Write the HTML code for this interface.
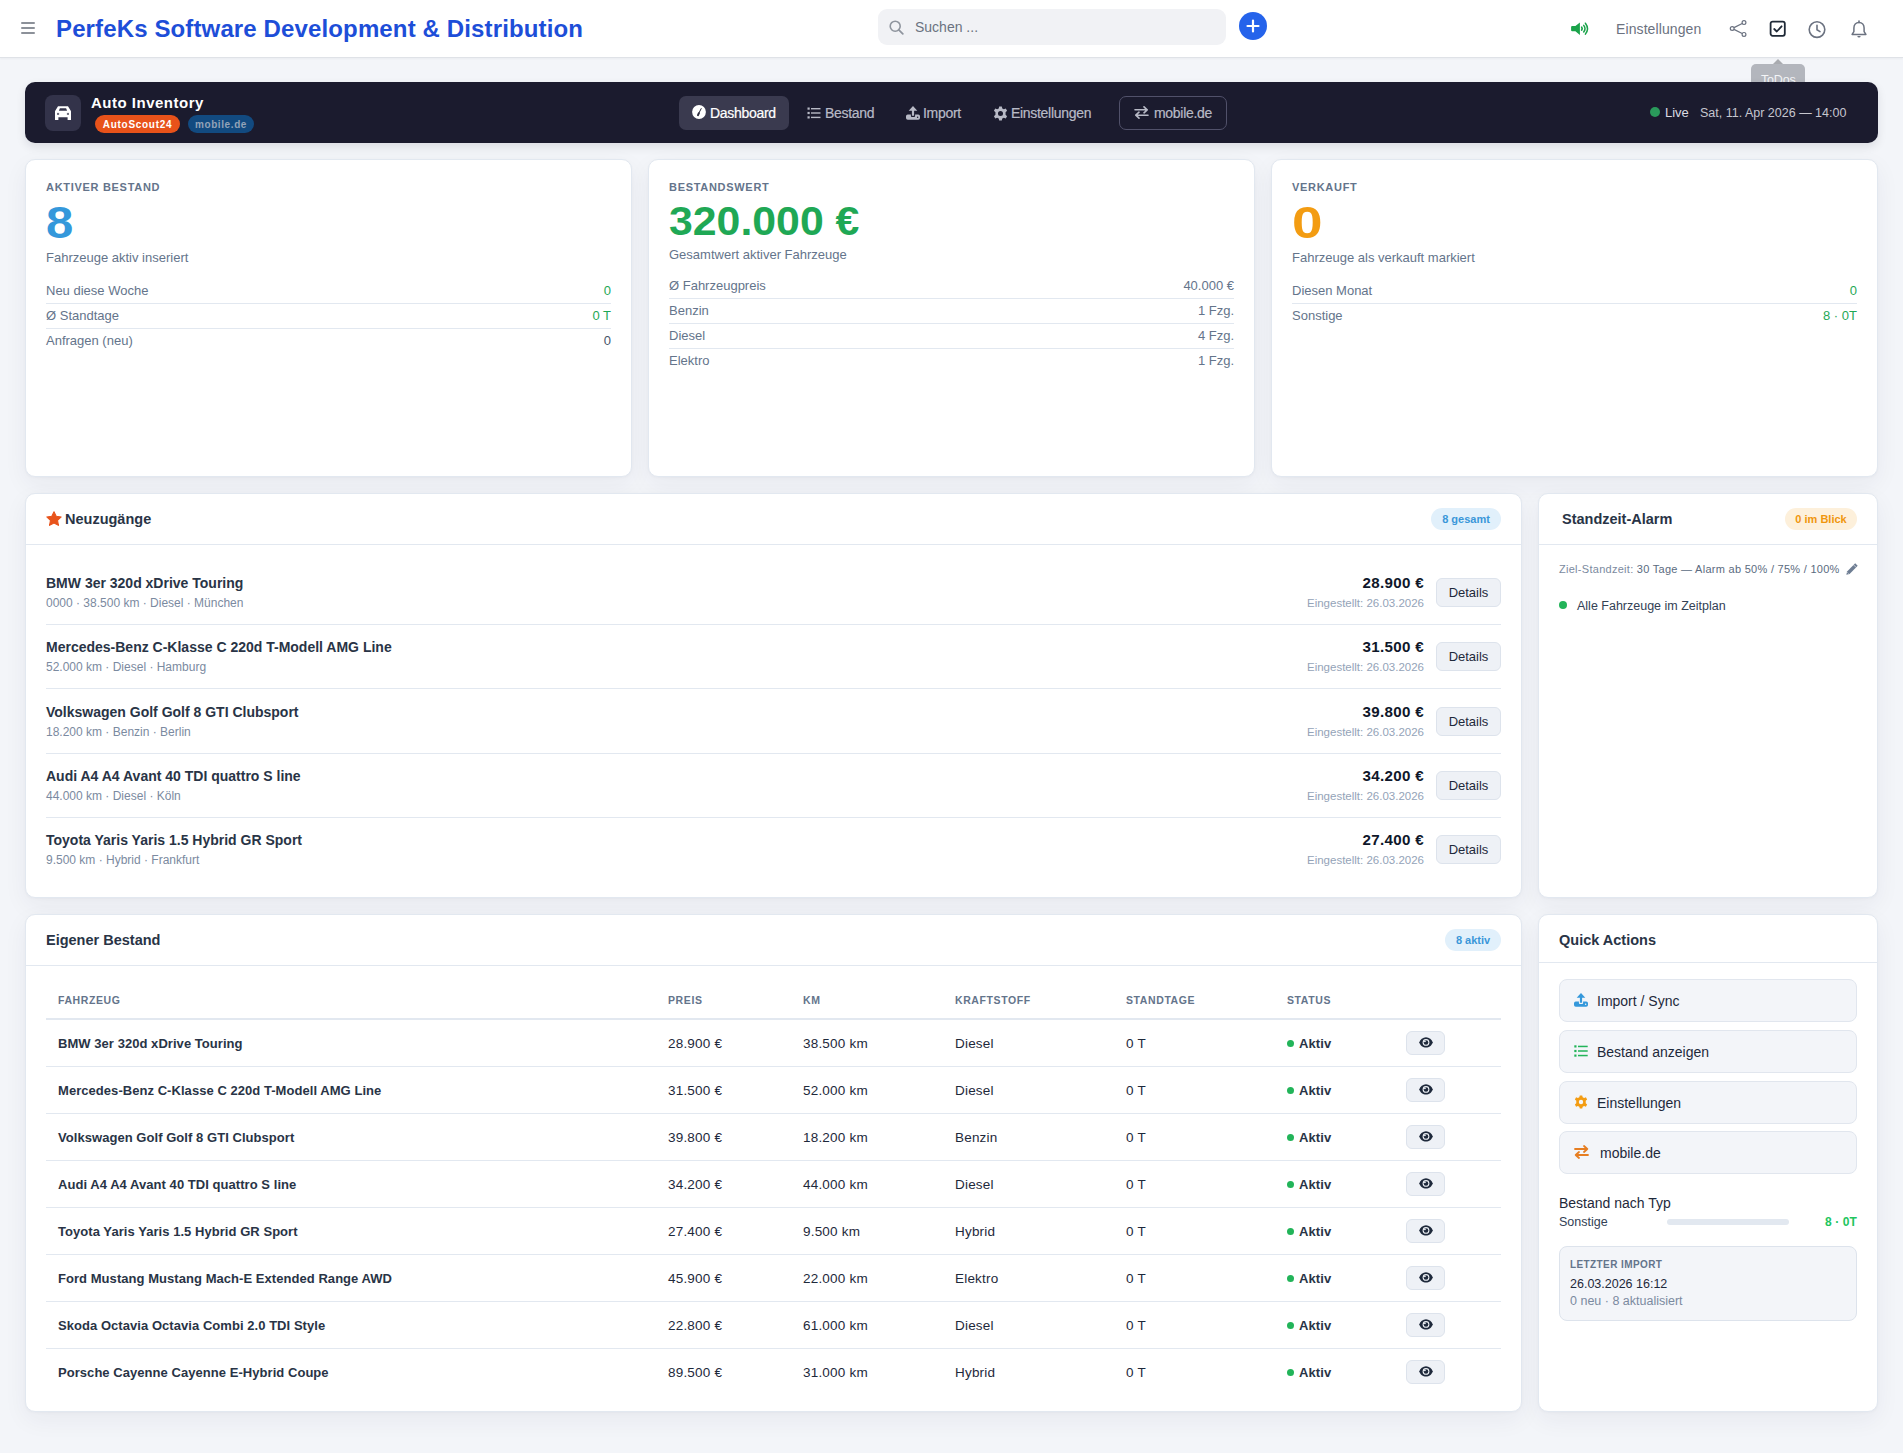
<!DOCTYPE html>
<html lang="de">
<head>
<meta charset="utf-8">
<title>Auto Inventory</title>
<style>
*{box-sizing:border-box;margin:0;padding:0}
html,body{width:1903px;height:1453px;overflow:hidden}
body{background:#f3f5f9;font-family:"Liberation Sans",sans-serif;color:#1e293b;position:relative}
.abs{position:absolute}
/* top header */
#top{position:absolute;left:0;top:0;width:1903px;height:58px;background:#fff;border-bottom:1px solid #dfe2e7;box-shadow:0 1px 2px rgba(0,0,0,.04)}
#burger{left:21px;top:22px;width:14px;height:12px}
#burger i{position:absolute;left:0;width:14px;height:2px;background:#8c9199;border-radius:1px}
#brand{left:56px;top:13px;font-weight:bold;font-size:24px;line-height:32px;color:#1d4ed8;letter-spacing:0.13px;white-space:nowrap}
#search{left:878px;top:9px;width:348px;height:36px;background:#f1f2f5;border-radius:9px}
#search span{position:absolute;left:37px;top:10px;font-size:14px;line-height:16px;color:#6b7280}
#plus{left:1239px;top:12px;width:28px;height:28px;border-radius:50%;background:#2563eb}
#einst{left:1616px;top:19px;font-size:14px;line-height:20px;color:#6b7280;letter-spacing:0.1px}
#tooltip{left:1751px;top:64px;width:54px;height:30px;background:#b3b6bd;border-radius:5px}
#tooltip:before{content:"";position:absolute;left:22px;top:-5px;border-left:5px solid transparent;border-right:5px solid transparent;border-bottom:5px solid #a9abb0}
#tooltip span{position:absolute;left:10px;top:8px;font-size:12.5px;line-height:16px;color:#f4f5f7;letter-spacing:-0.2px}

/* dark bar */
#bar{left:25px;top:82px;width:1853px;height:61px;background:#1b1b2e;border-radius:10px;box-shadow:0 4px 10px rgba(20,20,40,.10)}
#caricon{left:20px;top:13px;width:36px;height:36px;background:#33334a;border-radius:8px}
#apptitle{left:66px;top:12px;font-weight:bold;font-size:15px;line-height:18px;color:#fff;white-space:nowrap;letter-spacing:0.5px}
.badge{position:absolute;top:33px;height:18px;border-radius:9px;font-weight:bold;font-size:10px;line-height:20px;text-align:center;white-space:nowrap}
#b1{left:70px;width:85px;background:#e8521a;color:#fff;letter-spacing:0.7px}
#b2{left:163px;width:66px;background:#124a80;color:#93a3b8;letter-spacing:0.6px}
.nav{position:absolute;top:14px;height:34px;border-radius:7px;font-size:14px;line-height:34px;color:#b8bac6;white-space:nowrap;letter-spacing:-0.3px}
.nav svg{position:absolute;top:10px}
.nav span{position:absolute;top:0;-webkit-text-stroke:0.2px currentColor}
#n1{left:654px;width:110px;background:#3a3a4f;color:#fff}
#n5{left:1094px;width:108px;border:1px solid #51516a;line-height:32px}
#live{left:1625px;top:25px;width:10px;height:10px;border-radius:50%;background:#2a9a5b}
#livet{left:1640px;top:23px;font-size:13px;line-height:16px;color:#dcdce2}
#datet{left:1675px;top:23px;font-size:12.5px;line-height:16px;color:#c6c6ce;white-space:nowrap}

/* cards */
.card{position:absolute;background:#fff;border:1px solid #e2e8f0;border-radius:10px;box-shadow:0 8px 24px rgba(30,41,70,.055),0 1px 3px rgba(30,41,70,.03)}
.stat .lbl{position:absolute;left:20px;top:20px;font-weight:bold;font-size:11px;line-height:14px;color:#64748b;letter-spacing:0.7px;white-space:nowrap}
.stat .big{position:absolute;left:20px;top:37px;font-weight:bold;font-size:45px;line-height:52px;white-space:nowrap;transform-origin:0 0}
.stat .sub{position:absolute;left:20px;top:90px;font-size:13px;line-height:16px;color:#64748b;white-space:nowrap}
.rows{position:absolute;left:20px;right:20px;top:119px}
.row{position:relative;height:25px;border-bottom:1px solid #e2e8f0;font-size:13px;line-height:24px;color:#64748b}
.row:last-child{border-bottom:none}
.row b{position:absolute;right:0;top:0;font-weight:normal}
.g{color:#1fa855}
.sl{color:#475569}

.chead{position:absolute;left:0;top:0;right:0;border-bottom:1px solid #e2e8f0}
.ctitle{position:absolute;font-weight:bold;font-size:14.5px;line-height:18px;color:#293446;white-space:nowrap}
.pill{position:absolute;height:22px;border-radius:11px;font-weight:bold;font-size:11px;line-height:22px;text-align:center;white-space:nowrap}
.nrow{position:absolute;left:20px;width:1455px;height:64px;border-bottom:1px solid #e2e8f0}
.nt{position:absolute;left:0;top:13px;font-weight:bold;font-size:14px;line-height:18px;color:#293446;white-space:nowrap}
.ns{position:absolute;left:0;top:34px;font-size:12px;line-height:16px;color:#7b8aa0;white-space:nowrap}
.np{position:absolute;right:77px;top:13px;font-weight:bold;font-size:14px;line-height:18px;color:#0f172a;white-space:nowrap;letter-spacing:0.3px;transform:scaleX(1.08);transform-origin:100% 0}
.nd{position:absolute;right:77px;top:34px;font-size:11.5px;line-height:16px;color:#94a3b8;white-space:nowrap}
.dbtn{position:absolute;right:0;top:17px;width:65px;height:29px;background:#eef1f6;border:1px solid #dde3ec;border-radius:6px;font-size:13px;line-height:28px;text-align:center;color:#1e293b}
.ziel{left:20px;top:68px;font-size:11px;line-height:14px;color:#7b8aa0;letter-spacing:0.28px;white-space:nowrap}
.alle{left:38px;top:104px;font-size:12.5px;line-height:16px;color:#334155;white-space:nowrap}

.thead{position:absolute;left:20px;top:67px;width:1455px;height:38px;border-bottom:2px solid #e2e8f0}
.thead span{position:absolute;top:11px;font-weight:bold;font-size:10.5px;line-height:14px;color:#64748b;letter-spacing:0.6px;white-space:nowrap}
.trow{position:absolute;left:20px;width:1455px;height:47px;border-bottom:1px solid #e2e8f0;font-size:13.5px;color:#1e293b}
.trow span{position:absolute;top:15px;line-height:18px;white-space:nowrap;letter-spacing:0.2px}
.trow .tn{left:12px;font-weight:bold;font-size:13px;letter-spacing:0.05px;color:#293446}
.sdot{position:absolute;left:1241px;top:20px;width:7px;height:7px;border-radius:50%;background:#22b459}
.trow .tst{left:1253px;font-weight:bold;font-size:13px;letter-spacing:0.1px;color:#293446}
.eye{position:absolute;left:1360px;top:11px;width:39px;height:24px;background:#eef1f6;border:1px solid #dde3ec;border-radius:6px}
.eye svg{position:absolute;left:12px;top:5px}
.qa{position:absolute;left:20px;width:298px;height:43px;background:#f3f5f9;border:1px solid #e1e6ee;border-radius:8px}
.qa span{position:absolute;left:37px;top:12px;font-size:14px;line-height:18px;color:#1e293b;white-space:nowrap}
.imp{left:20px;top:331px;width:298px;height:75px;background:#f3f5f9;border:1px solid #dde3ec;border-radius:8px}
</style>
</head>
<body>

<!-- ============ TOP HEADER ============ -->
<div id="top">
  <div id="burger" class="abs"><i style="top:0"></i><i style="top:5px"></i><i style="top:10px"></i></div>
  <div id="brand" class="abs">PerfeKs Software Development &amp; Distribution</div>
  <div id="search" class="abs">
    <svg class="abs" style="left:11px;top:11px" width="15" height="15" viewBox="0 0 15 15"><circle cx="6.2" cy="6.2" r="5" fill="none" stroke="#8f959e" stroke-width="1.6"/><path d="M9.8 9.8 L13.8 13.8" stroke="#8f959e" stroke-width="1.8" stroke-linecap="round"/></svg>
    <span>Suchen ...</span>
  </div>
  <div id="plus" class="abs"><svg class="abs" style="left:6px;top:6px" width="16" height="16" viewBox="0 0 16 16"><path d="M8 2.5V13.5M2.5 8H13.5" stroke="#fff" stroke-width="2.2" stroke-linecap="round"/></svg></div>
  <svg class="abs" style="left:1565px;top:15px" width="35" height="27" viewBox="0 0 35 27"><path d="M6.1 12.1Q6.1 11 7.2 11H10.4L14.9 7.4V19.9L10.4 16.3H7.2Q6.1 16.3 6.1 15.2Z" fill="#1aa34a"/><path d="M16.7 12.2Q17.7 13.65 16.7 15.1" fill="none" stroke="#1aa34a" stroke-width="1.7" stroke-linecap="round"/><path d="M18.7 10.4Q21.3 13.65 18.7 17" fill="none" stroke="#1aa34a" stroke-width="1.5" stroke-linecap="round"/><path d="M20.4 8.2Q24.6 13.65 20.4 19.1" fill="none" stroke="#1aa34a" stroke-width="1.5" stroke-linecap="round"/></svg>
  <div id="einst" class="abs">Einstellungen</div>
  <!-- share -->
  <svg class="abs" style="left:1729px;top:19px" width="19" height="19" viewBox="0 0 19 19"><circle cx="15" cy="3.6" r="1.9" fill="none" stroke="#6b7280" stroke-width="1.2"/><circle cx="3.2" cy="9.5" r="1.9" fill="none" stroke="#6b7280" stroke-width="1.2"/><circle cx="15" cy="15.4" r="1.9" fill="none" stroke="#6b7280" stroke-width="1.2"/><path d="M5 8.6L13.2 4.5M5 10.4L13.2 14.5" stroke="#6b7280" stroke-width="1.2"/></svg>
  <!-- checkbox -->
  <svg class="abs" style="left:1769px;top:20px" width="18" height="18" viewBox="0 0 18 18"><rect x="1.6" y="1.6" width="14.2" height="14.2" rx="2" fill="none" stroke="#1f2937" stroke-width="1.8"/><path d="M5.2 9L7.8 11.5L12.6 6.3" fill="none" stroke="#1f2937" stroke-width="1.8" stroke-linecap="round" stroke-linejoin="round"/></svg>
  <!-- clock -->
  <svg class="abs" style="left:1807px;top:20px" width="20" height="20" viewBox="0 0 20 20"><circle cx="10" cy="9.6" r="7.8" fill="none" stroke="#6b7280" stroke-width="1.6"/><path d="M10 5.2V9.8L13 11.6" fill="none" stroke="#6b7280" stroke-width="1.6" stroke-linecap="round"/></svg>
  <!-- bell -->
  <svg class="abs" style="left:1850px;top:20px" width="18" height="20" viewBox="0 0 18 20"><path d="M9 2.4C5.9 2.4 3.9 4.8 3.9 7.9V11.6L2.1 14.4H15.9L14.1 11.6V7.9C14.1 4.8 12.1 2.4 9 2.4Z" fill="none" stroke="#6b7280" stroke-width="1.5" stroke-linejoin="round"/><path d="M7.3 16.1H10.7Q10.5 17.6 9 17.6Q7.5 17.6 7.3 16.1Z" fill="#6b7280"/><path d="M9 1V2.4" stroke="#6b7280" stroke-width="1.6" stroke-linecap="round"/></svg>
</div>
<div id="tooltip" class="abs"><span>ToDos</span></div>

<!-- ============ DARK BAR ============ -->
<div id="bar" class="abs">
  <div id="caricon" class="abs"><svg class="abs" style="left:10px;top:11px" width="16" height="14" viewBox="0 0 16 14"><path d="M3 0.2H13L15.6 4.6Q16 5 16 5.6V14H12.6V11.3H3.4V14H0V5.6Q0 5 0.4 4.6Z M4.9 2.2L3.9 4.8H12.1L11.1 2.2Z" fill="#fff" fill-rule="evenodd"/><rect x="2" y="6.9" width="2.1" height="2" fill="#6e6e7e"/><rect x="11.9" y="6.9" width="2.1" height="2" fill="#6e6e7e"/></svg></div>
  <div id="apptitle" class="abs">Auto Inventory</div>
  <div id="b1" class="badge">AutoScout24</div>
  <div id="b2" class="badge">mobile.de</div>

  <div id="n1" class="nav">
    <svg style="left:13px;top:9px" width="14" height="14" viewBox="0 0 14 14"><circle cx="7" cy="7" r="6.9" fill="#fff"/><path d="M9.2 3.6L6.6 8.6" stroke="#2a2a3c" stroke-width="1" stroke-linecap="round"/><path d="M6.9 8.2L6 10.2" stroke="#2a2a3c" stroke-width="2" stroke-linecap="round"/></svg>
    <span style="left:31px">Dashboard</span>
  </div>
  <div class="nav" style="left:782px;width:80px">
    <svg style="left:0px" width="14" height="14" viewBox="0 0 14 14"><g fill="#b8bac6"><rect x="0.5" y="1.5" width="2.2" height="2.2"/><rect x="0.5" y="5.9" width="2.2" height="2.2"/><rect x="0.5" y="10.3" width="2.2" height="2.2"/><rect x="4" y="2" width="9.5" height="1.4"/><rect x="4" y="6.3" width="9.5" height="1.4"/><rect x="4" y="10.7" width="9.5" height="1.4"/></g></svg>
    <span style="left:18px">Bestand</span>
  </div>
  <div class="nav" style="left:880px;width:70px">
    <svg style="left:1px;top:10px" width="14" height="14" viewBox="0 0 14 14"><path d="M7 0.1L11.3 4.7H8.1V9.8H5.9V4.7H2.7Z" fill="#b8bac6"/><path d="M0 10.3Q0 8.5 1.8 8.5H4.9V10.1Q4.9 11.1 5.9 11.1H8.1Q9.1 11.1 9.1 10.1V8.5H12.2Q14 8.5 14 10.3V11.9Q14 13.7 12.2 13.7H1.8Q0 13.7 0 11.9Z" fill="#b8bac6"/><circle cx="11.6" cy="11.2" r="0.75" fill="#1b1b2e"/></svg>
    <span style="left:18px">Import</span>
  </div>
  <div class="nav" style="left:968px;width:110px">
    <svg style="left:0px" width="15" height="15" viewBox="0 0 16 16"><path fill="#b8bac6" fill-rule="evenodd" d="M6.6 0.5H9.4L9.9 2.6L11.6 3.5L13.6 2.7L15 5.1L13.4 6.6V9.4L15 10.9L13.6 13.3L11.6 12.5L9.9 13.4L9.4 15.5H6.6L6.1 13.4L4.4 12.5L2.4 13.3L1 10.9L2.6 9.4V6.6L1 5.1L2.4 2.7L4.4 3.5L6.1 2.6Z M8 5.3A2.7 2.7 0 1 0 8 10.7A2.7 2.7 0 1 0 8 5.3Z"/></svg>
    <span style="left:18px">Einstellungen</span>
  </div>
  <div id="n5" class="nav">
    <svg style="left:14px;top:9px" width="15" height="13" viewBox="0 0 15 13"><path d="M1 3.8H13M10 0.8L13.2 3.8L10 6.8M14 9.2H2M5 6.2L1.8 9.2L5 12.2" fill="none" stroke="#b8bac6" stroke-width="1.6" stroke-linecap="round" stroke-linejoin="round"/></svg>
    <span style="left:34px">mobile.de</span>
  </div>

  <div id="live" class="abs"></div>
  <div id="livet" class="abs">Live</div>
  <div id="datet" class="abs">Sat, 11. Apr 2026 — 14:00</div>
</div>

<!-- ============ STAT CARDS ============ -->
<div class="card stat" style="left:25px;top:159px;width:607px;height:318px">
  <div class="lbl">AKTIVER BESTAND</div>
  <div class="big" style="color:#3498db;transform:scaleX(1.09)">8</div>
  <div class="sub">Fahrzeuge aktiv inseriert</div>
  <div class="rows">
    <div class="row">Neu diese Woche<b class="g">0</b></div>
    <div class="row">Ø Standtage<b class="g">0 T</b></div>
    <div class="row">Anfragen (neu)<b class="sl">0</b></div>
  </div>
</div>
<div class="card stat" style="left:648px;top:159px;width:607px;height:318px">
  <div class="lbl">BESTANDSWERT</div>
  <div class="big" style="color:#1fa855;font-size:40px;top:35px;transform:scaleX(1.07)">320.000 €</div>
  <div class="sub" style="top:87px">Gesamtwert aktiver Fahrzeuge</div>
  <div class="rows" style="top:114px">
    <div class="row">Ø Fahrzeugpreis<b>40.000 €</b></div>
    <div class="row">Benzin<b>1 Fzg.</b></div>
    <div class="row">Diesel<b>4 Fzg.</b></div>
    <div class="row">Elektro<b>1 Fzg.</b></div>
  </div>
</div>
<div class="card stat" style="left:1271px;top:159px;width:607px;height:318px">
  <div class="lbl">VERKAUFT</div>
  <div class="big" style="color:#f39c12;transform:scaleX(1.22)">0</div>
  <div class="sub">Fahrzeuge als verkauft markiert</div>
  <div class="rows">
    <div class="row">Diesen Monat<b class="g">0</b></div>
    <div class="row">Sonstige<b class="g">8 · 0T</b></div>
  </div>
</div>

<!-- ============ NEUZUGAENGE ============ -->
<div class="card" style="left:25px;top:493px;width:1497px;height:405px">
  <div class="chead" style="height:51px"></div>
  <svg class="abs" style="left:20px;top:17px" width="16" height="16" viewBox="0 0 24 24"><path d="M12 1.2L15.3 8L22.8 8.9L17.3 14.1L18.7 21.6L12 18L5.3 21.6L6.7 14.1L1.2 8.9L8.7 8Z" fill="#e8541c" stroke="#e8541c" stroke-width="1.6" stroke-linejoin="round"/></svg>
  <div class="ctitle" style="left:39px;top:16px">Neuzugänge</div>
  <div class="pill" style="left:1405px;top:14px;width:70px;background:#e1f0fb;color:#3a97d9">8 gesamt</div>
  <div class="nrow" style="top:67px">
    <div class="nt">BMW 3er 320d xDrive Touring</div><div class="ns">0000 · 38.500 km · Diesel · München</div>
    <div class="np">28.900 €</div><div class="nd">Eingestellt: 26.03.2026</div>
    <div class="dbtn">Details</div>
  </div>
  <div class="nrow" style="top:131px">
    <div class="nt">Mercedes-Benz C-Klasse C 220d T-Modell AMG Line</div><div class="ns">52.000 km · Diesel · Hamburg</div>
    <div class="np">31.500 €</div><div class="nd">Eingestellt: 26.03.2026</div>
    <div class="dbtn">Details</div>
  </div>
  <div class="nrow" style="top:196px">
    <div class="nt">Volkswagen Golf Golf 8 GTI Clubsport</div><div class="ns">18.200 km · Benzin · Berlin</div>
    <div class="np">39.800 €</div><div class="nd">Eingestellt: 26.03.2026</div>
    <div class="dbtn">Details</div>
  </div>
  <div class="nrow" style="top:260px">
    <div class="nt">Audi A4 A4 Avant 40 TDI quattro S line</div><div class="ns">44.000 km · Diesel · Köln</div>
    <div class="np">34.200 €</div><div class="nd">Eingestellt: 26.03.2026</div>
    <div class="dbtn">Details</div>
  </div>
  <div class="nrow" style="top:324px;border-bottom-color:transparent">
    <div class="nt">Toyota Yaris Yaris 1.5 Hybrid GR Sport</div><div class="ns">9.500 km · Hybrid · Frankfurt</div>
    <div class="np">27.400 €</div><div class="nd">Eingestellt: 26.03.2026</div>
    <div class="dbtn">Details</div>
  </div>
</div>
<!-- ============ STANDZEIT ============ -->
<div class="card" style="left:1538px;top:493px;width:340px;height:405px">
  <div class="chead" style="height:51px"></div>
  <div class="ctitle" style="left:23px;top:16px">Standzeit-Alarm</div>
  <div class="pill" style="left:246px;top:14px;width:72px;background:#fdf0db;color:#f0960e">0 im Blick</div>
  <div class="abs ziel">Ziel-Standzeit: <span style="color:#5b6b80">30 Tage — Alarm ab 50% / 75% / 100%</span></div>
  <svg class="abs" style="left:307px;top:69px" width="12" height="12" viewBox="0 0 12 12"><path d="M9.2 0.3L11.7 2.8L3.6 10.9L0.3 11.7L1.1 8.4Z" fill="#6e7d93"/><path d="M7.6 1.9L10.1 4.4" stroke="#fff" stroke-width="0.6"/><path d="M1.3 9.3L2.7 10.7" stroke="#fff" stroke-width="0.5"/></svg>
  <div class="abs" style="left:20px;top:107px;width:8px;height:8px;border-radius:50%;background:#22b459"></div>
  <div class="abs alle">Alle Fahrzeuge im Zeitplan</div>
</div>
<!-- ============ EIGENER BESTAND ============ -->
<div class="card" style="left:25px;top:914px;width:1497px;height:498px">
  <div class="chead" style="height:51px"></div>
  <div class="ctitle" style="left:20px;top:16px">Eigener Bestand</div>
  <div class="pill" style="left:1419px;top:14px;width:56px;background:#e1f0fb;color:#3a97d9">8 aktiv</div>
  <div class="thead">
    <span style="left:12px">FAHRZEUG</span><span style="left:622px">PREIS</span><span style="left:757px">KM</span><span style="left:909px">KRAFTSTOFF</span><span style="left:1080px">STANDTAGE</span><span style="left:1241px">STATUS</span>
  </div>
  <div class="trow" style="top:105px"><span class="tn">BMW 3er 320d xDrive Touring</span><span style="left:622px">28.900 €</span><span style="left:757px">38.500 km</span><span style="left:909px">Diesel</span><span style="left:1080px">0 T</span><i class="sdot"></i><span class="tst">Aktiv</span><div class="eye"><svg width="14" height="11" viewBox="0 0 14 11"><path d="M7 0.3C3.9 0.3 1.3 2.6 0.2 5.4C1.3 8.3 3.9 10.6 7 10.6C10.1 10.6 12.7 8.3 13.8 5.4C12.7 2.6 10.1 0.3 7 0.3Z" fill="#1e293b"/><circle cx="7" cy="5.4" r="3.4" fill="#eef1f6"/><circle cx="7" cy="5.5" r="2.3" fill="#1e293b"/><circle cx="5.9" cy="4.3" r="0.9" fill="#eef1f6"/></svg></div></div>
  <div class="trow" style="top:152px"><span class="tn">Mercedes-Benz C-Klasse C 220d T-Modell AMG Line</span><span style="left:622px">31.500 €</span><span style="left:757px">52.000 km</span><span style="left:909px">Diesel</span><span style="left:1080px">0 T</span><i class="sdot"></i><span class="tst">Aktiv</span><div class="eye"><svg width="14" height="11" viewBox="0 0 14 11"><path d="M7 0.3C3.9 0.3 1.3 2.6 0.2 5.4C1.3 8.3 3.9 10.6 7 10.6C10.1 10.6 12.7 8.3 13.8 5.4C12.7 2.6 10.1 0.3 7 0.3Z" fill="#1e293b"/><circle cx="7" cy="5.4" r="3.4" fill="#eef1f6"/><circle cx="7" cy="5.5" r="2.3" fill="#1e293b"/><circle cx="5.9" cy="4.3" r="0.9" fill="#eef1f6"/></svg></div></div>
  <div class="trow" style="top:199px"><span class="tn">Volkswagen Golf Golf 8 GTI Clubsport</span><span style="left:622px">39.800 €</span><span style="left:757px">18.200 km</span><span style="left:909px">Benzin</span><span style="left:1080px">0 T</span><i class="sdot"></i><span class="tst">Aktiv</span><div class="eye"><svg width="14" height="11" viewBox="0 0 14 11"><path d="M7 0.3C3.9 0.3 1.3 2.6 0.2 5.4C1.3 8.3 3.9 10.6 7 10.6C10.1 10.6 12.7 8.3 13.8 5.4C12.7 2.6 10.1 0.3 7 0.3Z" fill="#1e293b"/><circle cx="7" cy="5.4" r="3.4" fill="#eef1f6"/><circle cx="7" cy="5.5" r="2.3" fill="#1e293b"/><circle cx="5.9" cy="4.3" r="0.9" fill="#eef1f6"/></svg></div></div>
  <div class="trow" style="top:246px"><span class="tn">Audi A4 A4 Avant 40 TDI quattro S line</span><span style="left:622px">34.200 €</span><span style="left:757px">44.000 km</span><span style="left:909px">Diesel</span><span style="left:1080px">0 T</span><i class="sdot"></i><span class="tst">Aktiv</span><div class="eye"><svg width="14" height="11" viewBox="0 0 14 11"><path d="M7 0.3C3.9 0.3 1.3 2.6 0.2 5.4C1.3 8.3 3.9 10.6 7 10.6C10.1 10.6 12.7 8.3 13.8 5.4C12.7 2.6 10.1 0.3 7 0.3Z" fill="#1e293b"/><circle cx="7" cy="5.4" r="3.4" fill="#eef1f6"/><circle cx="7" cy="5.5" r="2.3" fill="#1e293b"/><circle cx="5.9" cy="4.3" r="0.9" fill="#eef1f6"/></svg></div></div>
  <div class="trow" style="top:293px"><span class="tn">Toyota Yaris Yaris 1.5 Hybrid GR Sport</span><span style="left:622px">27.400 €</span><span style="left:757px">9.500 km</span><span style="left:909px">Hybrid</span><span style="left:1080px">0 T</span><i class="sdot"></i><span class="tst">Aktiv</span><div class="eye"><svg width="14" height="11" viewBox="0 0 14 11"><path d="M7 0.3C3.9 0.3 1.3 2.6 0.2 5.4C1.3 8.3 3.9 10.6 7 10.6C10.1 10.6 12.7 8.3 13.8 5.4C12.7 2.6 10.1 0.3 7 0.3Z" fill="#1e293b"/><circle cx="7" cy="5.4" r="3.4" fill="#eef1f6"/><circle cx="7" cy="5.5" r="2.3" fill="#1e293b"/><circle cx="5.9" cy="4.3" r="0.9" fill="#eef1f6"/></svg></div></div>
  <div class="trow" style="top:340px"><span class="tn">Ford Mustang Mustang Mach-E Extended Range AWD</span><span style="left:622px">45.900 €</span><span style="left:757px">22.000 km</span><span style="left:909px">Elektro</span><span style="left:1080px">0 T</span><i class="sdot"></i><span class="tst">Aktiv</span><div class="eye"><svg width="14" height="11" viewBox="0 0 14 11"><path d="M7 0.3C3.9 0.3 1.3 2.6 0.2 5.4C1.3 8.3 3.9 10.6 7 10.6C10.1 10.6 12.7 8.3 13.8 5.4C12.7 2.6 10.1 0.3 7 0.3Z" fill="#1e293b"/><circle cx="7" cy="5.4" r="3.4" fill="#eef1f6"/><circle cx="7" cy="5.5" r="2.3" fill="#1e293b"/><circle cx="5.9" cy="4.3" r="0.9" fill="#eef1f6"/></svg></div></div>
  <div class="trow" style="top:387px"><span class="tn">Skoda Octavia Octavia Combi 2.0 TDI Style</span><span style="left:622px">22.800 €</span><span style="left:757px">61.000 km</span><span style="left:909px">Diesel</span><span style="left:1080px">0 T</span><i class="sdot"></i><span class="tst">Aktiv</span><div class="eye"><svg width="14" height="11" viewBox="0 0 14 11"><path d="M7 0.3C3.9 0.3 1.3 2.6 0.2 5.4C1.3 8.3 3.9 10.6 7 10.6C10.1 10.6 12.7 8.3 13.8 5.4C12.7 2.6 10.1 0.3 7 0.3Z" fill="#1e293b"/><circle cx="7" cy="5.4" r="3.4" fill="#eef1f6"/><circle cx="7" cy="5.5" r="2.3" fill="#1e293b"/><circle cx="5.9" cy="4.3" r="0.9" fill="#eef1f6"/></svg></div></div>
  <div class="trow" style="top:434px;border-bottom-color:transparent"><span class="tn">Porsche Cayenne Cayenne E-Hybrid Coupe</span><span style="left:622px">89.500 €</span><span style="left:757px">31.000 km</span><span style="left:909px">Hybrid</span><span style="left:1080px">0 T</span><i class="sdot"></i><span class="tst">Aktiv</span><div class="eye"><svg width="14" height="11" viewBox="0 0 14 11"><path d="M7 0.3C3.9 0.3 1.3 2.6 0.2 5.4C1.3 8.3 3.9 10.6 7 10.6C10.1 10.6 12.7 8.3 13.8 5.4C12.7 2.6 10.1 0.3 7 0.3Z" fill="#1e293b"/><circle cx="7" cy="5.4" r="3.4" fill="#eef1f6"/><circle cx="7" cy="5.5" r="2.3" fill="#1e293b"/><circle cx="5.9" cy="4.3" r="0.9" fill="#eef1f6"/></svg></div></div>
</div>
<!-- ============ QUICK ACTIONS ============ -->
<div class="card" style="left:1538px;top:914px;width:340px;height:498px">
  <div class="chead" style="height:48px"></div>
  <div class="ctitle" style="left:20px;top:16px">Quick Actions</div>
  <div class="qa" style="top:64px">
    <svg class="abs" style="left:14px;top:13px" width="14" height="14" viewBox="0 0 14 14"><path d="M7 0.1L11.3 4.7H8.1V9.8H5.9V4.7H2.7Z" fill="#3498db"/><path d="M0 10.3Q0 8.5 1.8 8.5H4.9V10.1Q4.9 11.1 5.9 11.1H8.1Q9.1 11.1 9.1 10.1V8.5H12.2Q14 8.5 14 10.3V11.9Q14 13.7 12.2 13.7H1.8Q0 13.7 0 11.9Z" fill="#3498db"/><circle cx="11.6" cy="11.2" r="0.75" fill="#f3f5f9"/></svg>
    <span>Import / Sync</span></div>
  <div class="qa" style="top:115px">
    <svg class="abs" style="left:14px;top:14px" width="14" height="12" viewBox="0 0 14 12"><g fill="#22b459"><rect x="0.3" y="0.3" width="2.2" height="2.2"/><rect x="0.3" y="4.9" width="2.2" height="2.2"/><rect x="0.3" y="9.5" width="2.2" height="2.2"/><rect x="4" y="0.7" width="9.7" height="1.5"/><rect x="4" y="5.25" width="9.7" height="1.5"/><rect x="4" y="9.8" width="9.7" height="1.5"/></g></svg>
    <span>Bestand anzeigen</span></div>
  <div class="qa" style="top:166px">
    <svg class="abs" style="left:14px;top:13px" width="14" height="14" viewBox="0 0 16 16"><path fill="#f39c12" fill-rule="evenodd" d="M6.6 0.5H9.4L9.9 2.6L11.6 3.5L13.6 2.7L15 5.1L13.4 6.6V9.4L15 10.9L13.6 13.3L11.6 12.5L9.9 13.4L9.4 15.5H6.6L6.1 13.4L4.4 12.5L2.4 13.3L1 10.9L2.6 9.4V6.6L1 5.1L2.4 2.7L4.4 3.5L6.1 2.6Z M8 5.5A2.5 2.5 0 1 0 8 10.5A2.5 2.5 0 1 0 8 5.5Z"/></svg>
    <span>Einstellungen</span></div>
  <div class="qa" style="top:216px">
    <svg class="abs" style="left:14px;top:13px" width="15" height="14" viewBox="0 0 15 14"><path d="M1 4H13M10 1L13.3 4L10 7M14 10H2M5 7L1.7 10L5 13" fill="none" stroke="#e67e22" stroke-width="1.8" stroke-linecap="round" stroke-linejoin="round"/></svg>
    <span style="left:40px">mobile.de</span></div>
  <div class="abs" style="left:20px;top:279px;font-size:14px;line-height:18px;color:#1e293b">Bestand nach Typ</div>
  <div class="abs" style="left:20px;top:299px;font-size:12.5px;line-height:16px;color:#334155">Sonstige</div>
  <div class="abs" style="left:128px;top:304px;width:122px;height:6px;border-radius:3px;background:#e2e8f0"></div>
  <div class="abs" style="right:20px;top:299px;font-weight:bold;font-size:12px;line-height:16px;color:#22c55e;letter-spacing:0.1px">8 · 0T</div>
  <div class="abs imp">
    <div class="abs" style="left:10px;top:12px;font-weight:bold;font-size:10px;line-height:12px;color:#64748b;letter-spacing:0.4px">LETZTER IMPORT</div>
    <div class="abs" style="left:10px;top:29px;font-size:12.5px;line-height:16px;color:#1e293b">26.03.2026 16:12</div>
    <div class="abs" style="left:10px;top:46px;font-size:12.5px;line-height:16px;color:#7b8aa0">0 neu · 8 aktualisiert</div>
  </div>
</div>

</body>
</html>
